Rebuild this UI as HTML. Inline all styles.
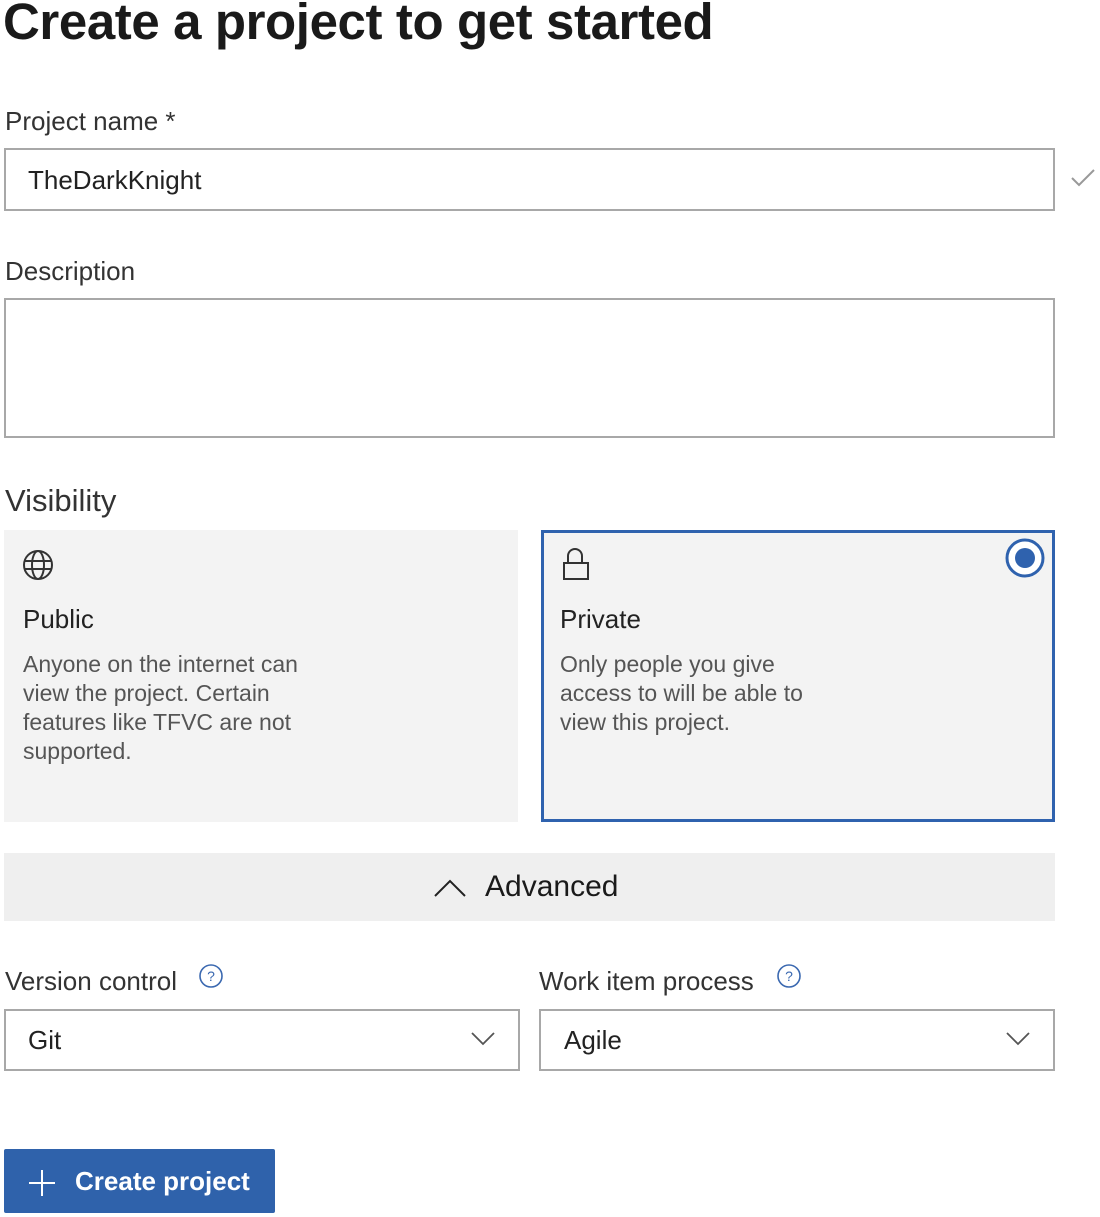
<!DOCTYPE html><html><head><style>
body{margin:0;width:1100px;height:1217px;background:#fff;font-family:"Liberation Sans",sans-serif;color:#222;position:relative;overflow:hidden}
.a{position:absolute;white-space:nowrap}
.box{position:absolute;border:2px solid #a8a8a8;box-sizing:border-box;background:#fff}
</style></head><body>
<div class="a" style="left:3px;top:-8px;font-size:51px;font-weight:bold;color:#1a1a1a;letter-spacing:-0.4px">Create a project to get started</div>
<div class="a" style="left:5px;top:106px;font-size:26px;color:#333">Project name *</div>
<div class="box" style="left:4px;top:148px;width:1051px;height:63px"></div>
<div class="a" style="left:28px;top:165px;font-size:26px;color:#222">TheDarkKnight</div>
<svg class="a" style="left:1070px;top:168px" width="26" height="20"><path d="M2 10l7 7L24 2" fill="none" stroke="#999" stroke-width="2"/></svg>
<div class="a" style="left:5px;top:256px;font-size:26px;color:#333">Description</div>
<div class="box" style="left:4px;top:298px;width:1051px;height:140px"></div>
<div class="a" style="left:5px;top:483px;font-size:31px;color:#333">Visibility</div>
<div class="a" style="left:4px;top:530px;width:514px;height:292px;background:#f3f3f3"></div>
<div class="a" style="left:541px;top:530px;width:508px;height:286px;background:#f3f3f3;border:3px solid #2f62ae"></div>
<svg class="a" style="left:22px;top:549px" width="32" height="32" fill="none" stroke="#333" stroke-width="2"><circle cx="16" cy="16" r="14"/><ellipse cx="16" cy="16" rx="6" ry="14"/><path d="M2 12h28M2 20h28"/></svg>
<svg class="a" style="left:562px;top:547px" width="28" height="36" fill="none" stroke="#333" stroke-width="2"><path d="M6 16V9a7 7 0 0 1 14 0v7"/><rect x="2" y="16" width="24" height="16"/></svg>
<svg class="a" style="left:1005px;top:538px" width="42" height="42"><circle cx="20" cy="20" r="18" fill="#fff" stroke="#2f62ae" stroke-width="3"/><circle cx="20" cy="20" r="10" fill="#2f62ae"/></svg>
<div class="a" style="left:23px;top:604px;font-size:26px;color:#222">Public</div>
<div class="a" style="left:23px;top:650px;font-size:23px;line-height:29px;color:#555">Anyone on the internet can<br>view the project. Certain<br>features like TFVC are not<br>supported.</div>
<div class="a" style="left:560px;top:604px;font-size:26px;color:#222">Private</div>
<div class="a" style="left:560px;top:650px;font-size:23px;line-height:29px;color:#555">Only people you give<br>access to will be able to<br>view this project.</div>
<div class="a" style="left:4px;top:853px;width:1051px;height:68px;background:#efefef"></div>
<svg class="a" style="left:433px;top:877px" width="34" height="22"><path d="M2 19L17 4l15 15" fill="none" stroke="#222" stroke-width="2"/></svg>
<div class="a" style="left:485px;top:870px;font-size:30px;color:#1a1a1a">Advanced</div>
<div class="a" style="left:5px;top:966px;font-size:26px;color:#333">Version control</div>
<svg class="a" style="left:198px;top:963px" width="26" height="26"><circle cx="13" cy="13" r="11" fill="none" stroke="#3a68b0" stroke-width="1.6"/><text x="13" y="18" font-size="14" text-anchor="middle" fill="#3a68b0" font-family="Liberation Sans">?</text></svg>
<div class="a" style="left:539px;top:966px;font-size:26px;color:#333">Work item process</div>
<svg class="a" style="left:776px;top:963px" width="26" height="26"><circle cx="13" cy="13" r="11" fill="none" stroke="#3a68b0" stroke-width="1.6"/><text x="13" y="18" font-size="14" text-anchor="middle" fill="#3a68b0" font-family="Liberation Sans">?</text></svg>
<div class="box" style="left:4px;top:1009px;width:516px;height:62px"></div>
<div class="a" style="left:28px;top:1025px;font-size:26px">Git</div>
<svg class="a" style="left:470px;top:1031px" width="26" height="16"><path d="M2 2l11 11L24 2" fill="none" stroke="#555" stroke-width="1.8"/></svg>
<div class="box" style="left:539px;top:1009px;width:516px;height:62px"></div>
<div class="a" style="left:564px;top:1025px;font-size:26px">Agile</div>
<svg class="a" style="left:1005px;top:1031px" width="26" height="16"><path d="M2 2l11 11L24 2" fill="none" stroke="#555" stroke-width="1.8"/></svg>
<div class="a" style="left:4px;top:1149px;width:271px;height:64px;background:#2f62ab;border-radius:2px"></div>
<svg class="a" style="left:27px;top:1168px" width="30" height="30"><path d="M15 2v26M2 15h26" stroke="#fff" stroke-width="2"/></svg>
<div class="a" style="left:75px;top:1166px;font-size:26px;font-weight:bold;color:#fff">Create project</div>
</body></html>
